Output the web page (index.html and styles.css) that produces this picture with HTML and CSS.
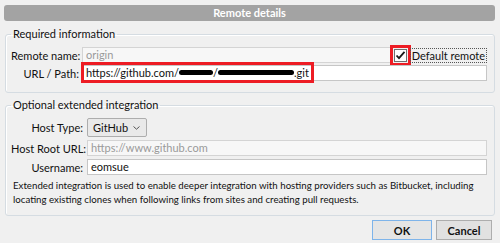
FILE: index.html
```html
<!DOCTYPE html>
<html lang="en">
  <head>
    <meta charset="UTF-8" />
    <title>Remote details</title>
    <link rel="stylesheet" href="styles.css">
  </head>
  <body>
    <div class="dialog-title">Remote details</div>

    <!-- Required information -->
    <fieldset class="group">
      <legend>Required information</legend>
      <div class="form form-required">
        <label class="form-label">Remote name:</label>
        <div class="inline-row">
          <div class="field field-disabled">origin</div>
          <span class="check-box marked">
            <svg width="13" height="13" viewBox="0 0 13 13">
              <path d="M2.5 6.5 L5 9.2 L10.5 2.8" fill="none" stroke="#1a1a1a" stroke-width="1.8" />
            </svg>
          </span>
          <span class="check-label">Default remote</span>
        </div>

        <label class="form-label">URL / Path:</label>
        <div class="field">
          <span class="marked url-text">https://github.com/<span class="redact redact-user"></span>/<span class="redact redact-repo"></span>.git</span>
        </div>
      </div>
    </fieldset>

    <!-- Optional extended integration -->
    <fieldset class="group group-optional">
      <legend>Optional extended integration</legend>
      <div class="form form-optional">
        <label class="form-label">Host Type:</label>
        <div class="select-row">
          <div class="select-button">
            <span>GitHub</span>
            <svg width="7" height="4" viewBox="0 0 7 4">
              <path d="M0.5 0.5 L3.5 3.2 L6.5 0.5" fill="none" stroke="#555" stroke-width="1" />
            </svg>
          </div>
        </div>

        <label class="form-label">Host Root URL:</label>
        <div class="field field-disabled">https://www.github.com</div>

        <label class="form-label">Username:</label>
        <div class="field">eomsue</div>
      </div>
      <p class="description">
        Extended integration is used to enable deeper integration with hosting providers such as Bitbucket, including<br>
        locating existing clones when following links from sites and creating pull requests.
      </p>
    </fieldset>

    <div class="button-bar">
      <button class="dialog-button default">OK</button>
      <button class="dialog-button">Cancel</button>
    </div>
  </body>
</html>
```

FILE: styles.css
```css
body {
  margin: 0;
  background-color: #f0f0f0;
  font-family: Lato, "Liberation Sans", sans-serif;
  font-size: 11px;
  color: #111;
}
.dialog-title {
  margin: 5px 5px 0 4px;
  height: 16px;
  line-height: 16px;
  background-color: #a3a3a3;
  border-radius: 3px;
  color: white;
  font-weight: bold;
  text-align: center;
}
.group {
  margin: 5px 5px 0 5px;
  padding: 5px 7px 11px 5px;
  min-width: 0;
  border: 1px solid #d5dce2;
  border-radius: 3px;
  box-shadow: inset 1px 1px 0 #fff;
}
.group legend {
  padding: 0 2px;
  line-height: 16px;
}
.group-optional {
  margin-top: 4px;
  padding-bottom: 9px;
}
.form {
  display: grid;
  align-items: center;
}
.form-required {
  grid-template-columns: 68px 1fr;
  column-gap: 3px;
  row-gap: 2px;
}
.form-optional {
  grid-template-columns: 72px 1fr;
  column-gap: 4px;
  row-gap: 3px;
}
.form-label {
  text-align: right;
  white-space: nowrap;
}
.field {
  box-sizing: border-box;
  height: 16px;
  line-height: 14px;
  padding: 0 3px;
  background-color: white;
  border: 1px solid #c6c6c6;
  white-space: nowrap;
  overflow: hidden;
}
.field-disabled {
  background-color: #f7f7f7;
  color: #9a9a9a;
  border-color: #d4d4d4;
}
.inline-row {
  display: flex;
  align-items: center;
}
.inline-row .field {
  flex-grow: 1;
  min-width: 0;
}
.check-box {
  box-sizing: border-box;
  flex-shrink: 0;
  width: 13px;
  height: 13px;
  margin-left: 3px;
  background-color: white;
  border: 1px solid #6f6f6f;
  display: flex;
}
.check-box svg {
  margin: -1px;
}
.check-label {
  margin-left: 3px;
  padding: 0 1px;
  line-height: 13px;
  border: 1px dotted #555;
  white-space: nowrap;
}
.marked {
  outline: 3px solid #ed1c24;
  outline-offset: 1px;
}
.url-text {
  display: inline-block;
  line-height: 13px;
  margin-left: -1px;
  padding: 0 1px;
}
.form-required .field {
  overflow: visible;
}
.redact {
  display: inline-block;
  height: 5px;
  background-color: #000;
  border-radius: 3px;
  vertical-align: 2px;
}
.redact-user {
  width: 34px;
}
.redact-repo {
  width: 76px;
}
.select-row {
  display: flex;
}
.select-button {
  box-sizing: border-box;
  height: 19px;
  width: 60px;
  padding: 0 6px 0 5px;
  display: flex;
  align-items: center;
  justify-content: space-between;
  background-color: #e9e9e9;
  border: 1px solid #adadad;
  border-radius: 2px;
}
.description {
  margin: 3px 0 0 2px;
  font-size: 9.7px;
  line-height: 14px;
  white-space: nowrap;
}
.button-bar {
  display: flex;
  justify-content: flex-end;
  gap: 4px;
  margin-top: 4px;
  padding-right: 8px;
}
.dialog-button {
  box-sizing: border-box;
  height: 20px;
  width: 56px;
  padding: 0;
  font-family: inherit;
  font-size: 11px;
  font-weight: bold;
  color: #111;
  background-color: #e1e1e1;
  border: 1px solid #adadad;
}
.dialog-button.default {
  width: 60px;
  border-color: #7eb4ea;
  background-color: #e5e5e5;
}
```
